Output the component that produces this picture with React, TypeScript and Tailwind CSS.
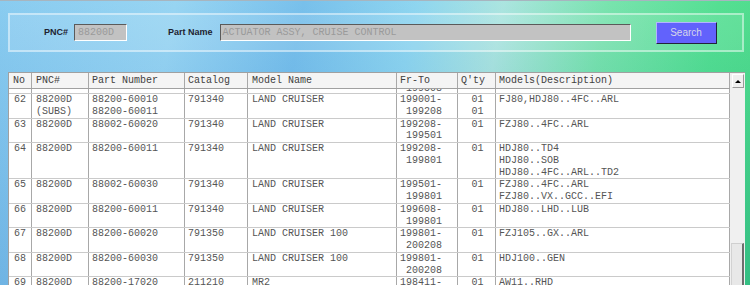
import React from "react";

interface PartRow {
  no: string;
  pnc: string[];
  part: string[];
  catalog: string;
  model: string;
  frTo: string[];
  qty: string[];
  desc: string[];
}

const rows: PartRow[] = [
  {
    no: "62",
    pnc: ["88200D", "(SUBS)"],
    part: ["88200-60010", "88200-60011"],
    catalog: "791340",
    model: "LAND CRUISER",
    frTo: ["199001-", " 199208"],
    qty: ["01", "01"],
    desc: ["FJ80,HDJ80..4FC..ARL"],
  },
  {
    no: "63",
    pnc: ["88200D"],
    part: ["88002-60020"],
    catalog: "791340",
    model: "LAND CRUISER",
    frTo: ["199208-", " 199501"],
    qty: ["01"],
    desc: ["FZJ80..4FC..ARL"],
  },
  {
    no: "64",
    pnc: ["88200D"],
    part: ["88200-60011"],
    catalog: "791340",
    model: "LAND CRUISER",
    frTo: ["199208-", " 199801"],
    qty: ["01"],
    desc: ["HDJ80..TD4", "HDJ80..SOB", "HDJ80..4FC..ARL..TD2"],
  },
  {
    no: "65",
    pnc: ["88200D"],
    part: ["88002-60030"],
    catalog: "791340",
    model: "LAND CRUISER",
    frTo: ["199501-", " 199801"],
    qty: ["01"],
    desc: ["FZJ80..4FC..ARL", "FZJ80..VX..GCC..EFI"],
  },
  {
    no: "66",
    pnc: ["88200D"],
    part: ["88200-60011"],
    catalog: "791340",
    model: "LAND CRUISER",
    frTo: ["199608-", " 199801"],
    qty: ["01"],
    desc: ["HDJ80..LHD..LUB"],
  },
  {
    no: "67",
    pnc: ["88200D"],
    part: ["88200-60020"],
    catalog: "791350",
    model: "LAND CRUISER 100",
    frTo: ["199801-", " 200208"],
    qty: ["01"],
    desc: ["FZJ105..GX..ARL"],
  },
  {
    no: "68",
    pnc: ["88200D"],
    part: ["88200-60030"],
    catalog: "791350",
    model: "LAND CRUISER 100",
    frTo: ["199801-", " 200208"],
    qty: ["01"],
    desc: ["HDJ100..GEN"],
  },
  {
    no: "69",
    pnc: ["88200D"],
    part: ["88200-17020"],
    catalog: "211210",
    model: "MR2",
    frTo: ["198411-", " 198912"],
    qty: ["01"],
    desc: ["AW11..RHD"],
  },
];

const Lines = ({ items }: { items: string[] }) => (
  <>
    {items.map((t, i) => (
      <div key={i} className="whitespace-pre">
        {t}
      </div>
    ))}
  </>
);

const cell = "shrink-0 border-r border-[#a8a8a8]";

const App = () => {
  return (
    <div className="relative h-[285px] w-[750px] overflow-hidden border-t border-[#a7b5bf] bg-[linear-gradient(180deg,rgba(255,255,255,0.1),rgba(20,70,170,0.16)),linear-gradient(100deg,#7cc6ee_0%,#8cd0f1_22%,#69b9e9_38%,#82d1ee_52%,#a2e2dc_63%,#6ae0a5_76%,#42dc86_90%,#3ad67c_100%)]">
      {/* search panel */}
      <div className="ml-[8px] mr-[6px] mt-[12px] flex h-[39px] items-center border-2 border-white/45 bg-white/10 pl-[34px] font-['Liberation_Sans',Arial,sans-serif]">
        <span className="text-[9px] font-bold text-[#1e2230]">PNC#</span>
        <div className="ml-[6px] h-[17px] w-[53px] border border-b-white border-l-[#5a5a5a] border-r-white border-t-[#5a5a5a] bg-[#c2c2c2] pl-[3px] font-['Liberation_Mono',monospace] text-[10px] leading-[15px] text-[#9a9a9a]">
          88200D
        </div>
        <span className="ml-[41px] text-[9px] font-bold text-[#1e2230]">
          Part Name
        </span>
        <div className="ml-[7px] h-[17px] w-[411px] border border-b-white border-l-[#5a5a5a] border-r-white border-t-[#5a5a5a] bg-[#c2c2c2] pl-[2px] font-['Liberation_Mono',monospace] text-[10px] leading-[15px] text-[#9a9a9a]">
          ACTUATOR ASSY, CRUISE CONTROL
        </div>
        <button className="ml-[25px] h-[22px] w-[61px] border border-b-[#23233a] border-l-[#b4b4ff] border-r-[#23233a] border-t-[#b4b4ff] bg-[#6262fc] text-[10px] text-[#d6d6ea]">
          Search
        </button>
      </div>

      {/* results table */}
      <div className="ml-[8px] mt-[20px] flex w-[737px] border-t border-[#a0a0a0] font-['Liberation_Mono',monospace] text-[10px] text-[#555555]">
        <div className="flex w-[722px] flex-col border-l border-[#a0a0a0] bg-white">
          <div className="flex h-[16px] border-b border-[#a0a0a0] bg-[#f4f4f4] leading-[15px] text-[#404040]">
            <div className={`${cell} w-[23px] pl-[4px]`}>No</div>
            <div className={`${cell} w-[57px] pl-[4px]`}>PNC#</div>
            <div className={`${cell} w-[96px] pl-[3px]`}>Part Number</div>
            <div className={`${cell} w-[63px] pl-[3px]`}>Catalog</div>
            <div className={`${cell} w-[149px] pl-[4px]`}>Model Name</div>
            <div className={`${cell} w-[61px] pl-[3px]`}>Fr-To</div>
            <div className={`${cell} w-[38px] pl-[3px]`}>Q'ty</div>
            <div className={`${cell} w-[234px] pl-[3px]`}>
              Models(Description)
            </div>
          </div>

          {/* bottom edge of the row scrolled out of view */}
          <div className="flex h-[5px] border-b border-[#cacaca] leading-[11.75px]">
            <div className={`${cell} w-[23px]`} />
            <div className={`${cell} w-[57px]`} />
            <div className={`${cell} w-[96px]`} />
            <div className={`${cell} w-[63px]`} />
            <div className={`${cell} w-[149px]`} />
            <div className={`${cell} w-[61px] overflow-hidden pl-[3px]`}>
              <div className="-mt-[6px] whitespace-pre"> 199508</div>
            </div>
            <div className={`${cell} w-[38px]`} />
            <div className={`${cell} w-[234px]`} />
          </div>

          <div className="leading-[11.75px]">
            {rows.map((r) => (
              <div key={r.no} className="flex border-b border-[#cacaca]">
                <div className={`${cell} w-[23px] pr-[5px] text-right`}>
                  {r.no}
                </div>
                <div className={`${cell} w-[57px] pl-[4px]`}>
                  <Lines items={r.pnc} />
                </div>
                <div className={`${cell} w-[96px] pl-[3px]`}>
                  <Lines items={r.part} />
                </div>
                <div className={`${cell} w-[63px] pl-[3px]`}>{r.catalog}</div>
                <div className={`${cell} w-[149px] pl-[4px]`}>{r.model}</div>
                <div className={`${cell} w-[61px] pl-[3px]`}>
                  <Lines items={r.frTo} />
                </div>
                <div className={`${cell} w-[38px] pl-[2px] text-center`}>
                  <Lines items={r.qty} />
                </div>
                <div className={`${cell} w-[234px] pl-[3px]`}>
                  <Lines items={r.desc} />
                </div>
              </div>
            ))}
          </div>
        </div>

        {/* scrollbar */}
        <div className="flex w-[15px] flex-col bg-[#f0f0f0]">
          <div className="ml-[2px] mt-[1px] flex h-[14px] w-[12px] items-center justify-center border border-b-[#9a9a9a] border-l-white border-r-[#9a9a9a] border-t-white">
            <div className="h-0 w-0 border-b-[3px] border-l-[3px] border-r-[3px] border-b-black border-l-transparent border-r-transparent" />
          </div>
          <div className="ml-[1px] mt-[155px] h-[60px] w-[13px] border-l border-r-2 border-t border-l-[#d2d2d2] border-r-[#6e6e6e] border-t-[#cfcfcf] bg-[#e8e8e8]" />
        </div>
      </div>
    </div>
  );
};

export default App;
